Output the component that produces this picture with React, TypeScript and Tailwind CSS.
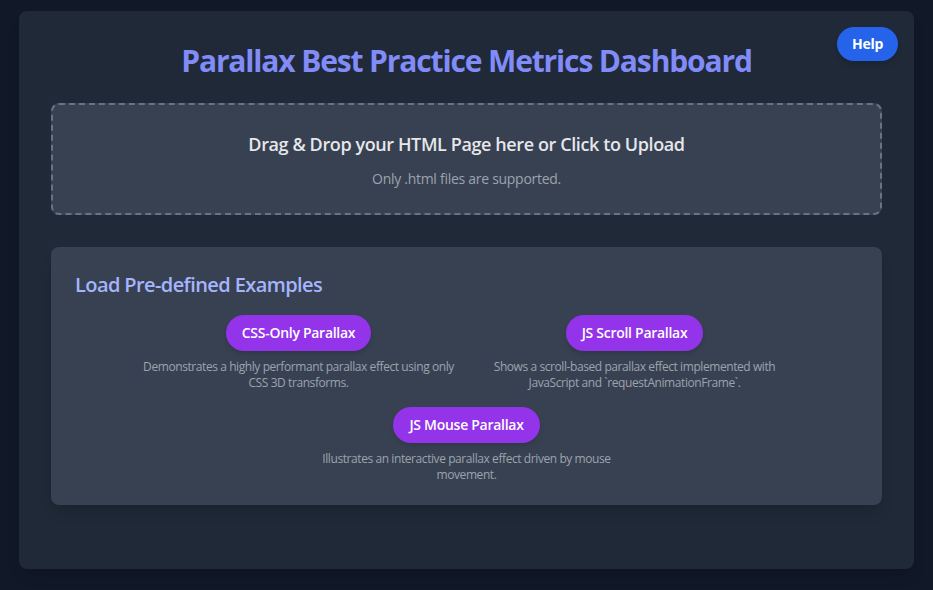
import React from "react";

const examples = [
  {
    label: "CSS-Only Parallax",
    desc: "Demonstrates a highly performant parallax effect using only CSS 3D transforms.",
  },
  {
    label: "JS Scroll Parallax",
    desc: "Shows a scroll-based parallax effect implemented with JavaScript and `requestAnimationFrame`.",
  },
  {
    label: "JS Mouse Parallax",
    desc: "Illustrates an interactive parallax effect driven by mouse movement.",
  },
];

export default function App() {
  return (
    <div
      className="min-h-[590px] bg-[#111827] px-[19px] pt-[11px] pb-[21px]"
      style={{ fontFamily: '"Open Sans", "Noto Sans", sans-serif' }}
    >
      <div className="relative rounded-lg bg-[#1f2937] p-8 shadow-lg">
        <button className="absolute right-4 top-4 rounded-full bg-[#2563eb] px-[15px] py-[7px] text-sm font-bold leading-5 tracking-[-0.02em] text-white shadow-md">
          Help
        </button>
        <h1 className="mb-6 text-center text-[30px] font-bold leading-9 tracking-[-0.038em] text-[#818cf8]">
          Parallax Best Practice Metrics Dashboard
        </h1>
        <div className="rounded-lg border-2 border-dashed border-[#6b7280] bg-[#374151] pt-[25px] pb-6 text-center">
          <p className="mb-[11px] text-[18px] font-semibold leading-7 tracking-[-0.022em] text-[#e5e7eb]">
            Drag &amp; Drop your HTML Page here or Click to Upload
          </p>
          <p className="text-sm leading-5 tracking-[-0.02em] text-[#9ca3af]">Only .html files are supported.</p>
        </div>
        <div className="mt-8 rounded-lg bg-[#374151] px-6 pt-6 pb-[22px] shadow-lg">
          <h2 className="mb-4 text-xl font-semibold leading-7 tracking-[-0.03em] text-[#a5b4fc]">
            Load Pre-defined Examples
          </h2>
          <div className="flex flex-wrap justify-center gap-4">
            {examples.map((e) => (
              <div key={e.label} className="flex w-80 flex-col items-center">
                <button className="rounded-full bg-[#9333ea] px-4 py-2 text-sm font-semibold leading-5 tracking-[-0.02em] text-white shadow-md">
                  {e.label}
                </button>
                <p className="mt-2 text-center text-xs leading-4 tracking-[-0.035em] text-[#9ca3af]">{e.desc}</p>
              </div>
            ))}
          </div>
        </div>
        <div className="h-8" />
      </div>
    </div>
  );
}
